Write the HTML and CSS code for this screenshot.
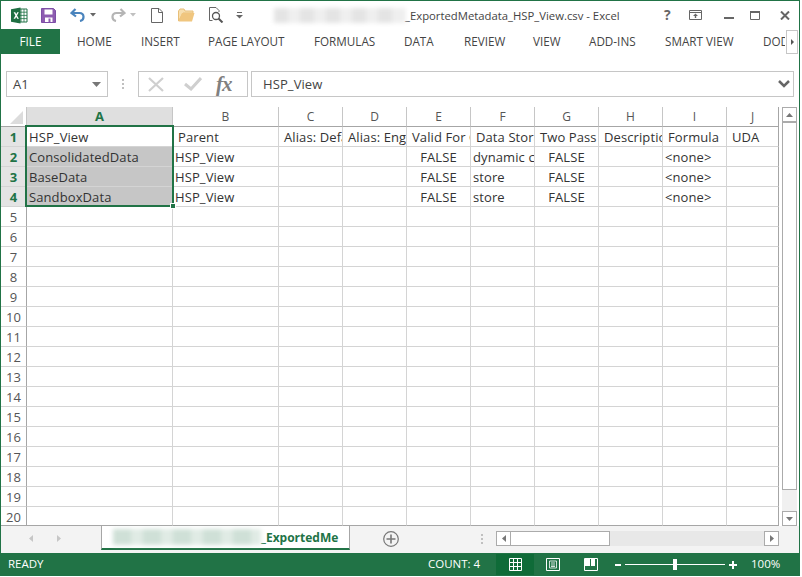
FILE: index.html
```html
<!DOCTYPE html>
<html lang="en">
<head>
<meta charset="utf-8">
<title>Excel</title>
<link rel="stylesheet" href="styles.css">
</head>
<body>
<div class="app">
  <header class="titlebar">
    <div class="qat">
      <svg class="ico i-excel" width="17" height="17" viewBox="0 0 17 17"><path d="M6 2h10v13H6z" fill="#fff" stroke="#217346"/><path d="M10 2v13M13 2v13M6 5.2h10M6 8.4h10M6 11.6h10" stroke="#217346" stroke-width=".8"/><path d="M0 2.2 9.5.5v16L0 14.8z" fill="#1e6f42"/><path d="M2.6 5.3h1.7l.9 1.9 1-1.9h1.6L6 8.5l1.9 3.2H6.200l-1-2-1 2H2.600l1.800-3.200z" fill="#fff"/></svg>
      <svg class="ico i-save" width="15" height="15" viewBox="0 0 15 15"><path d="M.5.500h12l2 2v12H.500z" fill="#8d5cb0" stroke="#7d4ea6"/><path d="M3.500 1.500h8v5h-8z" fill="#fff"/><path d="M4 9.500h7.500V14H4z" fill="#fff"/><path d="M7.500 10.500h2V14h-2z" fill="#8d5cb0"/></svg>
      <svg class="ico i-undo" width="16" height="14" viewBox="0 0 16 14"><path d="M5.500 1 1.500 5l4.500 3.500" fill="none" stroke="#4a84bd" stroke-width="2.200"/><path d="M2 5h7.500c5 0 5.500 7 .5 8" fill="none" stroke="#4a84bd" stroke-width="2.200"/></svg>
      <svg class="ico i-drop" width="6" height="4" viewBox="0 0 6 4"><path d="M0 0h6L3 3.500z" fill="#666"/></svg>
      <svg class="ico i-redo" width="16" height="14" viewBox="0 0 16 14"><path d="M10.500 1l4 4L10 8.500" fill="none" stroke="#b5b5b5" stroke-width="2.200"/><path d="M14 5H6.500c-5 0-5.500 7-.5 8" fill="none" stroke="#b5b5b5" stroke-width="2.200"/></svg>
      <svg class="ico i-drop2" width="6" height="4" viewBox="0 0 6 4"><path d="M0 0h6L3 3.500z" fill="#c0c0c0"/></svg>
      <svg class="ico i-new" width="12" height="15" viewBox="0 0 12 15"><path d="M.5.500h7.500l3.500 3.500v10.500H.500z" fill="#fff" stroke="#666"/><path d="M7.500.500v4h4" fill="none" stroke="#666"/></svg>
      <svg class="ico i-open" width="17" height="14" viewBox="0 0 17 14"><path d="M.5 13V3l1.500-2h4l1 2h8v2H5L.500 13z" fill="#f7dfb0" stroke="#e8bf78"/><path d="M.5 13.500 4 5h12.500l-2.500 8.500z" fill="#f0c67f"/></svg>
      <svg class="ico i-preview" width="15" height="16" viewBox="0 0 15 16"><path d="M.5 13.500V.500h6.500l3 3v1.500M.5 13.500h3" fill="none" stroke="#666"/><circle cx="7" cy="9" r="3.500" fill="#fff" stroke="#555" stroke-width="1.300"/><path d="m9.500 11.500 4 4" stroke="#555" stroke-width="2"/></svg>
      <svg class="ico i-custom" width="7" height="7" viewBox="0 0 7 7"><path d="M1 .5h5" stroke="#666"/><path d="M0 3h7L3.500 6.500z" fill="#666"/></svg>
    </div>
    <div class="doc-title"><span class="blur-title"></span><span>_ExportedMetadata_HSP_View.csv - Excel</span></div>
    <div class="win-controls">
      <span class="help">?</span>
      <svg width="13" height="10" viewBox="0 0 13 10"><path d="M.5.500h12v9H.500zM.5 2.500h12" fill="none" stroke="#666"/><path d="M6.500 3.500 4 6h1.800v2h1.400V6H9z" fill="#666"/></svg>
      <svg class="min" width="10" height="2" viewBox="0 0 10 2"><path d="M0 0h10v2H0z" fill="#666"/></svg>
      <svg class="max" width="10" height="9" viewBox="0 0 10 9"><path d="M.5.500h9v8h-9z" fill="none" stroke="#666"/><path d="M0 0h10v2H0z" fill="#666"/></svg>
      <svg class="close" width="10" height="9" viewBox="0 0 10 9"><path d="m1 .5 8 8M9 .5l-8 8" stroke="#666" stroke-width="2"/></svg>
    </div>
  </header>

  <nav class="ribbon">
    <span class="tab tab-file">FILE</span>
    <span class="tab">HOME</span>
    <span class="tab">INSERT</span>
    <span class="tab">PAGE LAYOUT</span>
    <span class="tab">FORMULAS</span>
    <span class="tab">DATA</span>
    <span class="tab">REVIEW</span>
    <span class="tab">VIEW</span>
    <span class="tab">ADD-INS</span>
    <span class="tab">SMART VIEW</span>
    <span class="tab tab-clip">DOD</span>
    <span class="tab-more"><svg width="3" height="6" viewBox="0 0 3 6"><path d="M0 0l3 3-3 3z" fill="#555"/></svg></span>
  </nav>

  <section class="formula">
    <div class="namebox"><span>A1</span><svg width="9" height="5" viewBox="0 0 9 5"><path d="M0 0h9L4.500 5z" fill="#777"/></svg></div>
    <div class="gripper"></div>
    <div class="fx-group">
      <svg width="16" height="15" viewBox="0 0 16 15"><path d="m1 1 14 13M15 1 1 14" stroke="#cfcfcf" stroke-width="2.200"/></svg>
      <svg width="18" height="14" viewBox="0 0 18 14"><path d="m1 7 6 5L17 1" fill="none" stroke="#cfcfcf" stroke-width="3"/></svg>
      <i class="fx">fx</i>
    </div>
    <div class="input"><span>HSP_View</span><svg width="12" height="8" viewBox="0 0 12 8"><path d="m1 1 5 5 5-5" fill="none" stroke="#666" stroke-width="2.500"/></svg></div>
  </section>

  <section class="sheet-area">
    <div class="grid-wrap">
      <table class="grid">
        <colgroup><col class="c-r"><col class="c-a"><col class="c-b"><col class="c-n"><col class="c-n"><col class="c-n"><col class="c-n"><col class="c-n"><col class="c-n"><col class="c-n"><col class="c-j"></colgroup>
        <thead>
          <tr><th class="corner"><svg width="13" height="13" viewBox="0 0 13 13"><path d="M13 0v13H0z" fill="#dcdcdc"/></svg></th><th class="sel-col">A</th><th>B</th><th>C</th><th>D</th><th>E</th><th>F</th><th>G</th><th>H</th><th>I</th><th>J</th></tr>
        </thead>
        <tbody>
          <tr><th class="sel-row">1</th><td class="a">HSP_View</td><td class="h">Parent</td><td class="h">Alias: Default</td><td class="h">Alias: English</td><td class="h">Valid For Consolidations</td><td class="h">Data Storage</td><td class="h">Two Pass Calculation</td><td class="h">Description</td><td class="h">Formula</td><td class="h">UDA</td></tr>
          <tr><th class="sel-row">2</th><td class="a fill">ConsolidatedData</td><td>HSP_View</td><td></td><td></td><td class="c">FALSE</td><td>dynamic calc</td><td class="c">FALSE</td><td></td><td>&lt;none&gt;</td><td></td></tr>
          <tr><th class="sel-row">3</th><td class="a fill">BaseData</td><td>HSP_View</td><td></td><td></td><td class="c">FALSE</td><td>store</td><td class="c">FALSE</td><td></td><td>&lt;none&gt;</td><td></td></tr>
          <tr><th class="sel-row">4</th><td class="a fill">SandboxData</td><td>HSP_View</td><td></td><td></td><td class="c">FALSE</td><td>store</td><td class="c">FALSE</td><td></td><td>&lt;none&gt;</td><td></td></tr>
          <tr><th>5</th><td></td><td></td><td></td><td></td><td></td><td></td><td></td><td></td><td></td><td></td></tr>
          <tr><th>6</th><td></td><td></td><td></td><td></td><td></td><td></td><td></td><td></td><td></td><td></td></tr>
          <tr><th>7</th><td></td><td></td><td></td><td></td><td></td><td></td><td></td><td></td><td></td><td></td></tr>
          <tr><th>8</th><td></td><td></td><td></td><td></td><td></td><td></td><td></td><td></td><td></td><td></td></tr>
          <tr><th>9</th><td></td><td></td><td></td><td></td><td></td><td></td><td></td><td></td><td></td><td></td></tr>
          <tr><th>10</th><td></td><td></td><td></td><td></td><td></td><td></td><td></td><td></td><td></td><td></td></tr>
          <tr><th>11</th><td></td><td></td><td></td><td></td><td></td><td></td><td></td><td></td><td></td><td></td></tr>
          <tr><th>12</th><td></td><td></td><td></td><td></td><td></td><td></td><td></td><td></td><td></td><td></td></tr>
          <tr><th>13</th><td></td><td></td><td></td><td></td><td></td><td></td><td></td><td></td><td></td><td></td></tr>
          <tr><th>14</th><td></td><td></td><td></td><td></td><td></td><td></td><td></td><td></td><td></td><td></td></tr>
          <tr><th>15</th><td></td><td></td><td></td><td></td><td></td><td></td><td></td><td></td><td></td><td></td></tr>
          <tr><th>16</th><td></td><td></td><td></td><td></td><td></td><td></td><td></td><td></td><td></td><td></td></tr>
          <tr><th>17</th><td></td><td></td><td></td><td></td><td></td><td></td><td></td><td></td><td></td><td></td></tr>
          <tr><th>18</th><td></td><td></td><td></td><td></td><td></td><td></td><td></td><td></td><td></td><td></td></tr>
          <tr><th>19</th><td></td><td></td><td></td><td></td><td></td><td></td><td></td><td></td><td></td><td></td></tr>
          <tr class="last"><th>20</th><td></td><td></td><td></td><td></td><td></td><td></td><td></td><td></td><td></td><td></td></tr>
        </tbody>
      </table>
      <div class="selection"><span class="handle"></span></div>
    </div>
    <div class="vscroll">
      <span class="sb-btn"><svg width="7" height="4" viewBox="0 0 7 4"><path d="M3.500 0 7 4H0z" fill="#777"/></svg></span>
      <span class="sb-thumb"></span>
      <span class="sb-track"></span>
      <span class="sb-btn"><svg width="7" height="4" viewBox="0 0 7 4"><path d="M0 0h7L3.500 4z" fill="#777"/></svg></span>
    </div>
  </section>

  <section class="sheetbar">
    <div class="sheet-nav">
      <svg width="4" height="7" viewBox="0 0 4 7"><path d="M4 0v7L0 3.500z" fill="#c6c6c6"/></svg>
      <svg width="4" height="7" viewBox="0 0 4 7"><path d="M0 0v7l4-3.500z" fill="#c6c6c6"/></svg>
    </div>
    <div class="sheet-tab"><span class="blur-tab"></span><span>_ExportedMe</span></div>
    <svg class="add" width="16" height="16" viewBox="0 0 16 16"><circle cx="8" cy="8" r="7.300" fill="none" stroke="#777" stroke-width="1.200"/><path d="M8 3.500v9M3.500 8h9" stroke="#777" stroke-width="1.600"/></svg>
    <div class="gripper small"></div>
    <div class="hscroll">
      <span class="hs-btn"><svg width="4" height="7" viewBox="0 0 4 7"><path d="M4 0v7L0 3.500z" fill="#777"/></svg></span>
      <span class="hs-thumb"></span>
      <span class="hs-track"></span>
      <span class="hs-btn"><svg width="4" height="7" viewBox="0 0 4 7"><path d="M0 0v7l4-3.500z" fill="#777"/></svg></span>
    </div>
  </section>

  <footer class="status">
    <span class="ready">READY</span>
    <span class="count">COUNT: 4</span>
    <span class="view active"><svg width="13" height="13" viewBox="0 0 13 13"><path d="M.5.500h12v12H.500zM4.500.500v12M8.500.500v12M.5 4.500h12M.5 8.500h12" fill="none" stroke="#fff"/></svg></span>
    <span class="view"><svg width="14" height="13" viewBox="0 0 14 13"><path d="M.5.500h13v12H.500z" fill="none" stroke="#fff"/><path d="M3.500 3h7v7h-7zM5 5h4M5 7h4M5 8.500h4" fill="none" stroke="#fff" stroke-width=".8"/></svg></span>
    <span class="view"><svg width="14" height="13" viewBox="0 0 14 13"><path d="M.5.500h13v12H.500z" fill="none" stroke="#fff"/><path d="M1 1h5v7H1zM7 1h4v7H7z" fill="#fff"/></svg></span>
    <div class="zoom">
      <span class="zm-minus"></span>
      <div class="zm-track"><span class="zm-thumb"></span></div>
      <span class="zm-plus"></span>
    </div>
    <span class="pct">100%</span>
  </footer>
</div>
</body>
</html>
```
FILE: styles.css
```css
* { box-sizing: border-box; }
html, body { margin: 0; padding: 0; background: #fff; overflow: hidden; }
body { width: 802px; height: 577px; font-family: "Open Sans", "Liberation Sans", sans-serif; color: #444; }
svg { display: block; flex: none; }

.app { width: 800px; height: 576px; border: 1px solid #217346; border-bottom: 0; display: flex; flex-direction: column; background: #fff; }

/* title bar */
.titlebar { height: 28px; display: flex; align-items: center; position: relative; flex: none; }
.qat { display: flex; align-items: center; width: 271px; flex: none; padding-left: 10px; }
.i-save { margin-left: 13px; }
.i-undo { margin-left: 14px; }
.i-drop { margin-left: 4px; }
.i-redo { margin-left: 14px; }
.i-drop2 { margin-left: 4px; }
.i-new { margin-left: 15px; }
.i-open { margin-left: 15px; }
.i-preview { margin-left: 14px; }
.i-custom { margin-left: 12px; }
.doc-title { display: flex; align-items: center; font-size: 11.300px; color: #444; white-space: nowrap; }
.blur-title { width: 131px; height: 15px; margin-left: 2px; margin-right: 0; background: repeating-linear-gradient(90deg, #e4e4e4 0 14px, #efefef 14px 26px); filter: blur(2px); }
.win-controls { margin-left: auto; display: flex; align-items: center; padding-right: 9px; }
.help { font-weight: 700; font-size: 14px; color: #666; width: 12px; line-height: 14px; margin-right: 13px; }
.win-controls .min { margin-left: 22px; margin-top: 6px; }
.win-controls .max { margin-left: 16px; }
.win-controls .close { margin-left: 20px; }

/* ribbon tabs */
.ribbon { height: 25px; display: grid; grid-template-columns: 76px 64px 67px 106px 90px 60px 69px 56px 76px 98px 1fr; align-items: center; flex: none; position: relative; font-size: 11.700px; color: #444; margin-bottom: 17px; }
.tab { white-space: nowrap; margin-top: -2px; }
.tab-file { width: 59px; height: 25px; margin-top: 0; background: #217346; color: #fff; line-height: 24px; text-align: center; }
.tab-clip { width: 22px; overflow: hidden; }
.tab-more { position: absolute; right: 1px; top: 1px; width: 12px; height: 24px; background: #fff; border: 1px solid #c6c6c6; display: flex; align-items: center; justify-content: center; }

/* formula bar */
.formula { height: 26px; display: flex; align-items: stretch; padding-left: 5px; flex: none; margin-bottom: 10px; font-size: 13px; letter-spacing: .1px; }
.namebox { width: 102px; border: 1px solid #c6c6c6; display: flex; align-items: center; justify-content: space-between; padding: 0 6px 0 6px; }
.gripper { width: 2px; margin: 0 14px 0 14px; background: repeating-linear-gradient(180deg, #c0c0c0 0 2px, transparent 2px 4px); height: 10px; align-self: center; }
.fx-group { width: 110px; border: 1px solid #c6c6c6; display: flex; align-items: center; padding-left: 9px; }
.fx-group svg + svg { margin-left: 20px; }
.fx { font-family: "Liberation Serif", serif; font-size: 21px; color: #808080; margin-left: 14px; letter-spacing: -1px; font-weight: 700; }
.input { margin-left: 3px; width: 543px; border: 1px solid #c6c6c6; display: flex; align-items: center; justify-content: space-between; padding: 0 3px 0 11px; }

/* sheet */
.sheet-area { display: flex; flex: none; height: 419px; }
.grid-wrap { position: relative; width: 778px; flex: none; }
.grid { border-collapse: separate; border-spacing: 0; table-layout: fixed; width: 778px; font-size: 13px; letter-spacing: .1px; color: #333; }
.c-r { width: 26px; }
.c-a { width: 146px; }
.c-b { width: 106px; }
.c-n { width: 64px; }
.c-j { width: 52px; }
th, td { padding: 0; height: 20px; line-height: 19px; overflow: hidden; white-space: nowrap; font-weight: 400; letter-spacing: 0; border-right: 1px solid #d4d4d4; border-bottom: 1px solid #d4d4d4; }
td { padding: 2px 0 0 2px; line-height: 17px; letter-spacing: .1px; }
td.a { padding-left: 2px; }
td.h { padding-left: 5px; }
td.c { text-align: center; padding-left: 0; }
td.fill { background: #c6c6c6; }
td:last-child, thead th:last-child { border-right-color: #a6a6a6; }
thead th { height: 20px; font-size: 12px; color: #555; border-bottom-color: #a6a6a6; border-right-color: #c6c6c6; }
tbody th { padding-top: 2px; line-height: 17px; font-size: 13px; color: #555; text-align: center; border-right-color: #a6a6a6; background: #fff; }
tr.last td, tr.last th { height: 19px; line-height: 16px; border-bottom-color: #a6a6a6; }
th.corner { background: #fff; vertical-align: bottom; }
th.corner svg { margin: 0 0 2px 9px; }
th.sel-col { background: #dfdfdf; color: #217346; font-weight: 700; font-size: 13px; }
th.sel-row { background: #e4e4e4; color: #217346; font-weight: 700; }
.selection { position: absolute; left: 24px; top: 18px; width: 149px; height: 82px; border: 2px solid #217346; pointer-events: none; }
.handle { position: absolute; right: -4px; bottom: -4px; background: #217346; border: 1px solid #fff; box-sizing: content-box; width: 4px; height: 4px; }

.vscroll { margin-left: 3px; width: 15px; display: flex; flex-direction: column; }
.sb-btn { height: 15px; border: 1px solid #ababab; display: flex; align-items: center; justify-content: center; flex: none; background: #fff; }
.sb-thumb { height: 368px; border: 1px solid #ababab; background: #fff; flex: none; }
.sb-track { flex: 1; background: #f0f0f0; }

/* sheet tabs */
.sheetbar { height: 27px; background: #f3f3f3; display: flex; align-items: center; flex: none; position: relative; }
.sheet-nav { width: 100px; display: flex; align-items: center; gap: 24px; padding-left: 28px; flex: none; margin-top: -3px; }
.sheet-tab { width: 249px; height: 24px; align-self: flex-start; background: #fff; border: 1px solid #a6a6a6; border-top: 0; border-bottom: 2px solid #217346; display: flex; align-items: center; font-weight: 700; font-size: 12px; color: #217346; padding-left: 11px; flex: none; white-space: nowrap; }
.blur-tab { width: 148px; height: 16px; flex: none; background: repeating-linear-gradient(90deg, #cfe0d7 0 18px, #e0ebe5 18px 30px); filter: blur(2px); }
.add { margin-left: 33px; margin-top: -1px; }
.gripper.small { margin: -1px 13px 0 82px; }
.hscroll { width: 283px; height: 15px; display: flex; flex: none; margin-top: -2px; }
.hs-btn { width: 15px; border: 1px solid #ababab; background: #fff; display: flex; align-items: center; justify-content: center; flex: none; }
.hs-thumb { width: 99px; border: 1px solid #ababab; border-left: 0; background: #fff; flex: none; }
.hs-track { flex: 1; background: #e8e8e8; }

/* status */
.status { height: 23px; background: #217346; color: #fff; display: flex; align-items: center; font-size: 11.500px; flex: none; margin-left: -1px; margin-right: -1px; }
.ready { margin-left: 8px; width: 420px; flex: none; margin-top: -2px; }
.count { width: 68px; flex: none; margin-top: -2px; }
.view { width: 38px; height: 21px; display: flex; align-items: center; justify-content: center; flex: none; }
.view.active { background: #0f6b38; }
.zoom { display: flex; align-items: center; margin-left: 5px; flex: none; }
.zm-minus { width: 6px; height: 2px; background: #fff; }
.zm-track { width: 100px; height: 1px; background: #fff; margin-left: 4px; position: relative; }
.zm-thumb { position: absolute; left: 48px; top: -5px; width: 4px; height: 11px; background: #fff; }
.zm-plus { width: 8px; height: 8px; margin-left: 4px; background: linear-gradient(#fff,#fff) center/8px 2px no-repeat, linear-gradient(#fff,#fff) center/2px 8px no-repeat; }
.pct { margin-left: 14px; white-space: nowrap; margin-top: -2px; }
```
